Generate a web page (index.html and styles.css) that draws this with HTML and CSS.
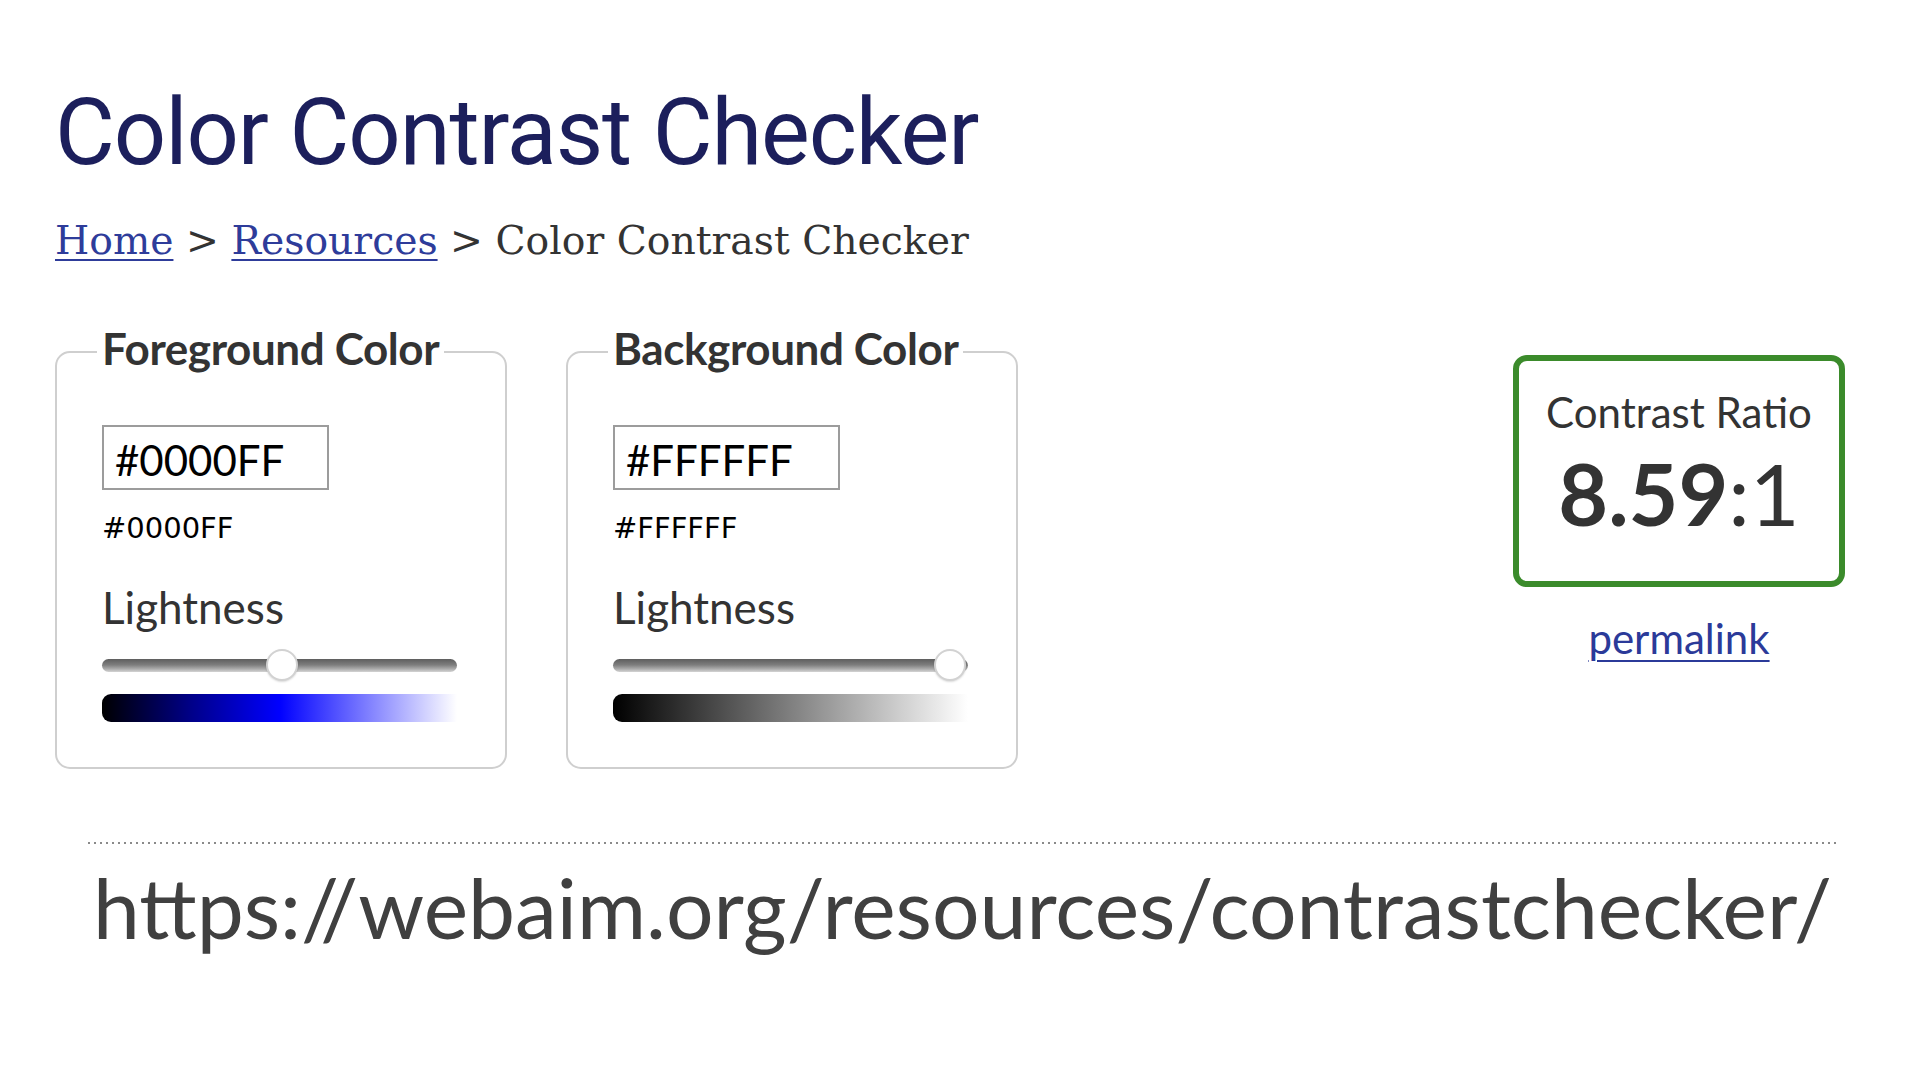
FILE: index.html
```html
<!DOCTYPE html>
<html lang="en">
<head>
<meta charset="utf-8">
<title>Color Contrast Checker</title>
<link rel="stylesheet" href="styles.css">
</head>
<body>
<main class="page">
  <h1 class="title">Color Contrast Checker</h1>
  <nav class="crumbs"><a href="#">Home</a> &gt; <a href="#">Resources</a> &gt; Color Contrast Checker</nav>

  <section class="tool">
    <fieldset class="picker">
      <legend>Foreground Color</legend>
      <input class="hex-input" type="text" value="#0000FF">
      <div class="hex-small">#0000FF</div>
      <div class="light-label">Lightness</div>
      <div class="slider">
        <div class="track"></div>
        <div class="thumb" style="left: 50.7%"></div>
      </div>
      <div class="bar bar-blue"></div>
    </fieldset>

    <fieldset class="picker">
      <legend>Background Color</legend>
      <input class="hex-input" type="text" value="#FFFFFF">
      <div class="hex-small">#FFFFFF</div>
      <div class="light-label">Lightness</div>
      <div class="slider">
        <div class="track"></div>
        <div class="thumb" style="left: 95%"></div>
      </div>
      <div class="bar bar-gray"></div>
    </fieldset>

    <div class="result">
      <div class="ratio-box">
        <div class="ratio-label">Contrast Ratio</div>
        <div class="ratio-value"><b>8.59</b>:1</div>
      </div>
      <a class="permalink" href="#">permalink</a>
    </div>
  </section>

  <div class="dots"></div>
  <div class="url">https://webaim.org/resources/contrastchecker/</div>
</main>
</body>
</html>
```

FILE: styles.css
```css
html, body {
  margin: 0;
  padding: 0;
  background: #ffffff;
}

.page {
  padding: 81px 75px 0 55px;
  width: 1920px;
  box-sizing: border-box;
}

.title {
  margin: 0;
  font-family: Roboto, "Liberation Sans", sans-serif;
  font-weight: 400;
  font-size: 92px;
  line-height: 104px;
  letter-spacing: -1.1px;
  color: #1c1f5c;
}

.crumbs {
  margin-top: 32px;
  font-family: "DejaVu Serif", "Liberation Serif", serif;
  font-size: 39.3px;
  line-height: 48px;
  color: #333333;
}

.crumbs a {
  color: #2e3c9a;
  text-decoration: underline;
  text-decoration-thickness: 2px;
  text-underline-offset: 5px;
}

.tool {
  display: flex;
  align-items: flex-start;
  gap: 59px;
  margin-top: 58px;
}

.picker {
  box-sizing: border-box;
  width: 452px;
  margin: 0;
  padding: 0 48px 45px 45px;
  border: 2px solid #cfcfcf;
  border-radius: 15px;
  min-inline-size: 0;
}

.picker legend {
  margin-left: -5px;
  padding: 0 5px 8px 5px;
  font-family: Lato, "Noto Sans", sans-serif;
  font-weight: 700;
  font-size: 44px;
  line-height: 50px;
  letter-spacing: -0.4px;
  white-space: nowrap;
  color: #333333;
}

.hex-input {
  display: block;
  box-sizing: border-box;
  width: 227px;
  height: 65px;
  margin: 44px 0 0 0;
  padding: 4px 0 0 11px;
  border: 2px solid #9c9c9c;
  border-radius: 0;
  font-family: Lato, "Noto Sans", sans-serif;
  font-size: 42px;
  color: #000000;
  background: #ffffff;
  outline: none;
}

.hex-small {
  margin-top: 21px;
  font-family: "DejaVu Sans", Verdana, sans-serif;
  font-size: 29px;
  line-height: 34px;
  color: #000000;
}

.light-label {
  margin-top: 37px;
  font-family: Lato, "Noto Sans", sans-serif;
  font-size: 44px;
  line-height: 50px;
  color: #333333;
}

.slider {
  position: relative;
  height: 32px;
  margin-top: 17px;
  display: flex;
  align-items: center;
}

.track {
  flex: 1;
  height: 13px;
  border-radius: 7px;
  background: linear-gradient(to bottom, #5e5e5e 0%, #7d7d7d 45%, #a9a9a9 75%, #d4d4d4 100%);
}

.thumb {
  position: absolute;
  top: 0;
  width: 32px;
  height: 32px;
  margin-left: -16px;
  box-sizing: border-box;
  border-radius: 50%;
  background: #ffffff;
  border: 2px solid #d2d2d2;
  box-shadow: 0 1px 2px rgba(0, 0, 0, 0.15);
}

.bar {
  height: 28px;
  margin-top: 13px;
  border-radius: 9px 0 0 9px;
}

.bar-blue {
  background: linear-gradient(to right, #000000 0%, #000088 25%, #0000ff 50%, #ffffff 100%);
}

.bar-gray {
  background: linear-gradient(to right, #000000 0%, #ffffff 100%);
}

.result {
  margin-left: auto;
  margin-top: 32px;
  display: flex;
  flex-direction: column;
  align-items: center;
}

.ratio-box {
  box-sizing: border-box;
  width: 332px;
  height: 232px;
  border: 6px solid #3b8b2b;
  border-radius: 14px;
  display: flex;
  flex-direction: column;
  align-items: center;
  padding-top: 26px;
  font-family: Lato, "Noto Sans", sans-serif;
  color: #333333;
}

.ratio-label {
  font-size: 42px;
  line-height: 50px;
}

.ratio-value {
  margin-top: 6px;
  font-size: 86px;
  line-height: 100px;
  font-weight: 400;
}

.ratio-value b {
  font-weight: 700;
}

.permalink {
  margin-top: 26px;
  font-family: Lato, "Noto Sans", sans-serif;
  font-size: 42px;
  line-height: 50px;
  color: #2b3a99;
  text-decoration: underline;
  text-decoration-thickness: 2px;
  text-underline-offset: 6px;
}

.dots {
  height: 2px;
  margin: 73px 8px 0 33px;
  background-image: linear-gradient(to right, #8a8a8a 2px, transparent 2px);
  background-size: 6px 2px;
  background-repeat: repeat-x;
}

.url {
  margin: 13px 0 0 38px;
  font-family: Lato, "Noto Sans", sans-serif;
  font-size: 84px;
  line-height: 100px;
  color: #404040;
  white-space: nowrap;
}
```
